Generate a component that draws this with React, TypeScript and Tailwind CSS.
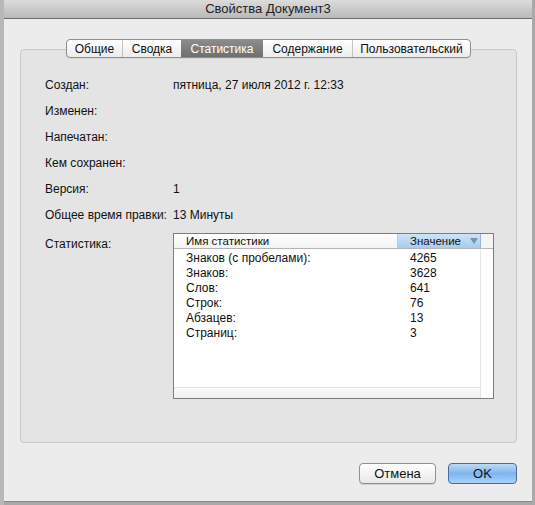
import React from 'react'

const tabs: [string, string][] = [
  ['Общие', 'w-[55px]'],
  ['Сводка', 'w-[59px]'],
  ['Статистика', 'w-[82px]'],
  ['Содержание', 'w-[89px]'],
  ['Пользовательский', 'w-[118px]'],
]

const fields: [string, string][] = [
  ['Создан:', 'пятница, 27 июля 2012 г. 12:33'],
  ['Изменен:', ''],
  ['Напечатан:', ''],
  ['Кем сохранен:', ''],
  ['Версия:', '1'],
  ['Общее время правки:', '13 Минуты'],
]

const stats: [string, string][] = [
  ['Знаков (с пробелами):', '4265'],
  ['Знаков:', '3628'],
  ['Слов:', '641'],
  ['Строк:', '76'],
  ['Абзацев:', '13'],
  ['Страниц:', '3'],
]

export default function App() {
  return (
    <div
      className="relative w-[535px] h-[505px] overflow-hidden bg-[#a9a9a9] text-[12px] text-[#111]"
      style={{ fontFamily: '"Liberation Sans", Arial, sans-serif' }}
    >
      {/* background document peeking on the left */}
      <div className="absolute left-0 top-0 w-[4px] h-full bg-[#b8b8b8]" />

      <div className="absolute left-[4px] top-0 w-[528px] h-[502px] flex flex-col bg-[#ececec] border-b border-[#8a8a8a]">
        {/* title bar */}
        <div className="h-[19px] shrink-0 flex items-center justify-center bg-gradient-to-b from-[#dcdcdc] to-[#b9b9b9] border-b border-[#6e6e6e] text-[13px] text-[#222]">
          Свойства Документ3
        </div>

        <div className="relative flex-1 pl-[16px] pr-[15px] pt-[30px]">
          {/* group box */}
          <div className="h-[394px] rounded-[4px] border border-[#c9c9c9] bg-[#e4e4e4] pt-[27px] pl-[24px]">
            <div className="flex flex-col gap-[10px]">
              {fields.map(([k, v]) => (
                <div key={k} className="flex h-[16px] items-center">
                  <span className="w-[128px] shrink-0">{k}</span>
                  <span>{v}</span>
                </div>
              ))}
              <div className="flex">
                <span className="w-[128px] shrink-0 pt-[2px]">Статистика:</span>
                <div className="w-[321px] h-[166px] border border-[#7d7d7d] bg-white flex flex-col">
                  <div className="flex h-[15px] shrink-0 border-b border-[#b5b5b5] bg-gradient-to-b from-white to-[#f2f2f2] text-[11.5px]">
                    <div className="w-[224px] pl-[12px] border-r border-[#c8c8c8] leading-[15px]">Имя статистики</div>
                    <div className="w-[83px] flex items-center pl-[12px] bg-gradient-to-b from-[#cfe3f8] to-[#a7cbee] border-r border-[#9bb5d0] leading-[15px]">
                      <span>Значение</span>
                      <svg width="8" height="6" viewBox="0 0 8 6" className="ml-[9px]">
                        <path d="M0 0 L8 0 L4 6 Z" fill="#7b93ad" />
                      </svg>
                    </div>
                    <div className="flex-1 bg-[#f4f4f4]" />
                  </div>
                  <div className="flex flex-1">
                    <div className="w-[307px] border-r border-[#e6e6e6] flex flex-col">
                      <div className="flex-1 pt-[1px]">
                        {stats.map(([k, v]) => (
                          <div key={k} className="flex h-[15px] items-center">
                            <span className="w-[236px] pl-[12px]">{k}</span>
                            <span>{v}</span>
                          </div>
                        ))}
                      </div>
                      <div className="h-[11px] border-t border-[#e3e3e3] bg-gradient-to-b from-[#fafafa] to-[#f0f0f0]" />
                    </div>
                    <div className="flex-1 bg-white" />
                  </div>
                </div>
              </div>
            </div>
          </div>

          {/* tabs */}
          <div className="absolute left-[62px] top-[20px] flex h-[19px] rounded-[4px] border border-[#8e8e8e] bg-gradient-to-b from-white to-[#ececec] overflow-hidden text-[12px] shadow-[0_1px_0_#d8d8d8]">
            {tabs.map(([t, w], i) => {
              const active = t === 'Статистика'
              const prevActive = i > 0 && tabs[i - 1][0] === 'Статистика'
              return (
                <div
                  key={t}
                  className={
                    active
                      ? `${w} flex items-center justify-center bg-gradient-to-b from-[#8c8c8c] to-[#6f6f6f] text-white`
                      : `${w} flex items-center justify-center ${i > 0 && !prevActive ? 'border-l border-[#c4c4c4]' : ''}`
                  }
                >
                  {t}
                </div>
              )
            })}
          </div>

          {/* buttons */}
          <div className="flex justify-end gap-[12px] mt-[20px]">
            <button className="w-[77px] h-[21px] rounded-[4px] border border-[#8f8f8f] bg-gradient-to-b from-white to-[#e8e8e8] text-[13px] shadow-[0_1px_0_#d0d0d0]">
              Отмена
            </button>
            <button className="w-[69px] h-[21px] rounded-[4px] border border-[#4b6b9e] bg-gradient-to-b from-[#bcdaf9] via-[#7eb6ef] to-[#a9d1f7] text-[13px]">
              OK
            </button>
          </div>
        </div>
      </div>
    </div>
  )
}
